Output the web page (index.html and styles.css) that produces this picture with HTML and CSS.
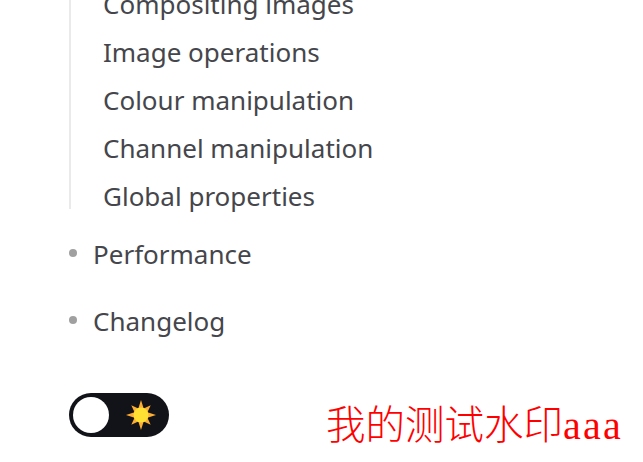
FILE: index.html
```html
<!DOCTYPE html>
<html lang="en">
<head>
    <meta charset="UTF-8">
    <title>Menu</title>
    <link rel="stylesheet" href="styles.css">
</head>
<body>
    <div id="menu">
        <ul id="sub-list">
            <li>Compositing images</li>
            <li>Image operations</li>
            <li>Colour manipulation</li>
            <li>Channel manipulation</li>
            <li>Global properties</li>
        </ul>
        <ul id="top-list">
            <li>Performance</li>
            <li>Changelog</li>
        </ul>
        <div id="toggle">
            <span id="knob"></span>
            <svg id="sun" viewBox="0 0 30 30" width="30" height="30">
                <path fill="#ffac33" d="M15 0L17.68 8.53 24.7 5.3 21.47 12.32 30 15 21.47 17.68 24.7 24.7 17.68 21.47 15 30 12.32 21.47 5.3 24.7 8.53 17.68 0 15 8.53 12.32 5.3 5.3 12.32 8.53z"/>
                <circle fill="#ffe033" cx="15" cy="15" r="7.5"/>
            </svg>
        </div>
    </div>
    <div id="watermark">我的测试水印<span id="latin">aaa</span></div>
</body>
</html>
```
FILE: styles.css
```css
*{
    padding: 0;
    margin: 0;
    box-sizing: border-box;
}
html,body{
    height: 462px;
    overflow: hidden;
    background: #ffffff;
}
body{
    font-family: "Noto Sans", "Open Sans", sans-serif;
    color: #45464b;
}
#menu{
    margin-top: -20px;
    padding-left: 69px;
}
#sub-list{
    list-style: none;
    border-left: 2px solid #eaeaea;
    padding-left: 32px;
    height: 229px;
}
#sub-list li{
    font-size: 26px;
    line-height: 48px;
    white-space: nowrap;
}
#top-list{
    list-style: none;
    margin-top: 27px;
}
#top-list li{
    position: relative;
    font-size: 26px;
    line-height: 36px;
    padding-left: 24px;
    margin-bottom: 31px;
}
#top-list li::before{
    content: "";
    position: absolute;
    left: 0;
    top: 13px;
    width: 8px;
    height: 8px;
    border-radius: 50%;
    background: #a0a0a0;
}
#toggle{
    display: flex;
    align-items: center;
    justify-content: space-between;
    width: 100px;
    height: 44px;
    margin-top: 54px;
    padding: 0 13px 0 4px;
    border-radius: 22px;
    background: #111318;
}
#knob{
    width: 36px;
    height: 36px;
    border-radius: 50%;
    background: #ffffff;
}
#watermark{
    position: absolute;
    left: 326px;
    top: 398px;
    font-family: "Noto Sans CJK SC", serif;
    font-weight: 300;
    font-size: 39.5px;
    line-height: 48px;
    color: #ff0000;
    white-space: nowrap;
}
#latin{
    font-family: "Liberation Serif", serif;
    font-weight: 400;
    font-size: 40px;
    letter-spacing: 2.2px;
}
```
